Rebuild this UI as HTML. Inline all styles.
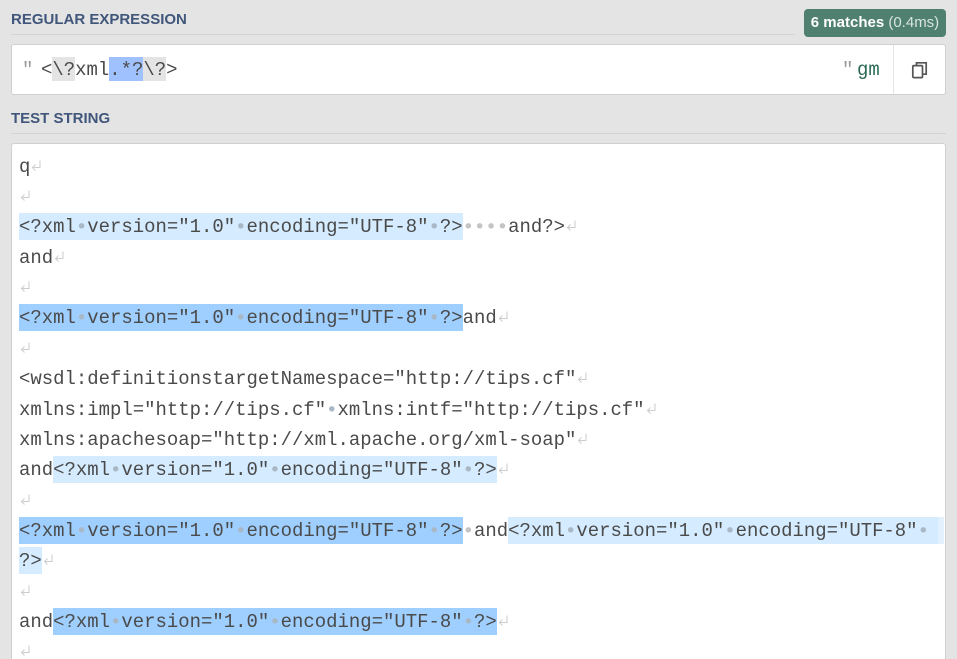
<!DOCTYPE html>
<html><head><meta charset="utf-8">
<style>
html,body{margin:0;padding:0;width:957px;height:659px;overflow:hidden;background:#e4e4e4}
body{position:relative;font-family:"Liberation Sans",sans-serif}
.abs{position:absolute}
.h{position:absolute;left:11px;font-size:15px;font-weight:bold;color:#40567a;line-height:20px;white-space:pre}
.rule{position:absolute;height:1px;background:#d3d3d3}
.box{position:absolute;background:#fff;border:1px solid #d0d0d0;border-radius:3px;box-sizing:border-box}
.m{font-family:"Liberation Mono","DejaVu Sans Mono",monospace;font-size:18.97px;color:#4a4a4a;white-space:pre}
.l{position:absolute;left:19px;height:27px;line-height:29px;width:930px}
.l span{display:inline-block;height:27px;vertical-align:top}
.a{background:#d5ebff}
.b{background:#9fcfff}
i{font-style:normal;color:#a9b8c6;font-family:"DejaVu Sans Mono",monospace;display:inline-block;width:11.385px;text-align:center;vertical-align:top}
.d i{color:#c4c4c4}
.w{display:inline-block;width:11.385px;height:12px;vertical-align:top;margin-top:7px}
.r{position:absolute;top:58px;height:24px;line-height:24px}
</style></head><body>

<div class="h" style="top:10px">REGULAR EXPRESSION</div>
<div class="rule" style="left:11px;top:34px;width:784px"></div>

<div class="abs" style="left:804px;top:9px;width:142px;height:28px;background:#4f8070;border-radius:4px;color:#fff;font-size:15px;line-height:28px;text-align:center;white-space:pre"><b>6 matches</b> <span style="color:#d9e5e1">(0.4ms)</span></div>

<div class="box" style="left:11px;top:44px;width:935px;height:51px"></div>
<div class="abs" style="left:893px;top:45px;width:1px;height:49px;background:#e4e4e4"></div>
<div class="abs" style="left:52px;top:57px;width:23px;height:24px;background:#e4e4e4"></div>
<div class="abs" style="left:143px;top:57px;width:23px;height:24px;background:#e4e4e4"></div>
<div class="abs" style="left:109px;top:57px;width:34px;height:24px;background:#9fc2ff"></div>
<div class="m r" style="left:22px;color:#999">"</div>
<div class="m r" style="left:41px">&lt;\?xml.*?\?&gt;</div>
<div class="m r" style="left:842px;color:#999">"</div>
<div class="m r" style="left:857px;color:#2a6a55">gm</div>
<svg class="abs" style="left:911px;top:61px" width="17" height="18" viewBox="0 0 17 18" fill="none" stroke="#555" stroke-width="1.7"><path d="M5.5 4V1.8h9.7v11.4H12"/><rect x="1.8" y="4.6" width="9.7" height="12" rx="1"/></svg>

<div class="h" style="top:109px">TEST STRING</div>
<div class="rule" style="left:11px;top:133px;width:935px"></div>

<div class="box" style="left:11px;top:143px;width:935px;height:530px"></div>

<div class="m l" style="top:153px">q<svg class="w" viewBox="0 0 11.4 12" fill="none" stroke="#ccc"><path d="M10 .5V7.5H2.5M5.5 4.5l-3 3 3 3"/></svg></div>
<div class="m l" style="top:183px"><svg class="w" viewBox="0 0 11.4 12" fill="none" stroke="#ccc"><path d="M10 .5V7.5H2.5M5.5 4.5l-3 3 3 3"/></svg></div>
<div class="m l" style="top:213px"><span class="a">&lt;?xml<i>•</i>version="1.0"<i>•</i>encoding="UTF-8"<i>•</i>?&gt;</span><span class="d"><i>•</i><i>•</i><i>•</i><i>•</i></span>and?&gt;<svg class="w" viewBox="0 0 11.4 12" fill="none" stroke="#ccc"><path d="M10 .5V7.5H2.5M5.5 4.5l-3 3 3 3"/></svg></div>
<div class="m l" style="top:244px">and<svg class="w" viewBox="0 0 11.4 12" fill="none" stroke="#ccc"><path d="M10 .5V7.5H2.5M5.5 4.5l-3 3 3 3"/></svg></div>
<div class="m l" style="top:274px"><svg class="w" viewBox="0 0 11.4 12" fill="none" stroke="#ccc"><path d="M10 .5V7.5H2.5M5.5 4.5l-3 3 3 3"/></svg></div>
<div class="m l" style="top:304px"><span class="b">&lt;?xml<i>•</i>version="1.0"<i>•</i>encoding="UTF-8"<i>•</i>?&gt;</span>and<svg class="w" viewBox="0 0 11.4 12" fill="none" stroke="#ccc"><path d="M10 .5V7.5H2.5M5.5 4.5l-3 3 3 3"/></svg></div>
<div class="m l" style="top:335px"><svg class="w" viewBox="0 0 11.4 12" fill="none" stroke="#ccc"><path d="M10 .5V7.5H2.5M5.5 4.5l-3 3 3 3"/></svg></div>
<div class="m l" style="top:365px">&lt;wsdl:definitionstargetNamespace="http://tips.cf"<svg class="w" viewBox="0 0 11.4 12" fill="none" stroke="#ccc"><path d="M10 .5V7.5H2.5M5.5 4.5l-3 3 3 3"/></svg></div>
<div class="m l" style="top:396px">xmlns:impl="http://tips.cf"<i>•</i>xmlns:intf="http://tips.cf"<svg class="w" viewBox="0 0 11.4 12" fill="none" stroke="#ccc"><path d="M10 .5V7.5H2.5M5.5 4.5l-3 3 3 3"/></svg></div>
<div class="m l" style="top:426px">xmlns:apachesoap="http://xml.apache.org/xml-soap"<svg class="w" viewBox="0 0 11.4 12" fill="none" stroke="#ccc"><path d="M10 .5V7.5H2.5M5.5 4.5l-3 3 3 3"/></svg></div>
<div class="m l" style="top:456px">and<span class="a">&lt;?xml<i>•</i>version="1.0"<i>•</i>encoding="UTF-8"<i>•</i>?&gt;</span><svg class="w" viewBox="0 0 11.4 12" fill="none" stroke="#ccc"><path d="M10 .5V7.5H2.5M5.5 4.5l-3 3 3 3"/></svg></div>
<div class="m l" style="top:487px"><svg class="w" viewBox="0 0 11.4 12" fill="none" stroke="#ccc"><path d="M10 .5V7.5H2.5M5.5 4.5l-3 3 3 3"/></svg></div>
<div class="abs a" style="left:508px;top:517px;width:430px;height:27px"></div>
<div class="abs" style="left:938px;top:517px;width:6px;height:27px;background:#e3f1ff"></div>
<div class="m l" style="top:517px"><span class="b">&lt;?xml<i>•</i>version="1.0"<i>•</i>encoding="UTF-8"<i>•</i>?&gt;</span><i style="color:#c4c4c4">•</i>and&lt;?xml<i>•</i>version="1.0"<i>•</i>encoding="UTF-8"<i>•</i></div>
<div class="m l" style="top:547px"><span class="a">?&gt;</span><svg class="w" viewBox="0 0 11.4 12" fill="none" stroke="#ccc"><path d="M10 .5V7.5H2.5M5.5 4.5l-3 3 3 3"/></svg></div>
<div class="m l" style="top:578px"><svg class="w" viewBox="0 0 11.4 12" fill="none" stroke="#ccc"><path d="M10 .5V7.5H2.5M5.5 4.5l-3 3 3 3"/></svg></div>
<div class="m l" style="top:608px">and<span class="b">&lt;?xml<i>•</i>version="1.0"<i>•</i>encoding="UTF-8"<i>•</i>?&gt;</span><svg class="w" viewBox="0 0 11.4 12" fill="none" stroke="#ccc"><path d="M10 .5V7.5H2.5M5.5 4.5l-3 3 3 3"/></svg></div>
<div class="m l" style="top:638px"><svg class="w" viewBox="0 0 11.4 12" fill="none" stroke="#ccc"><path d="M10 .5V7.5H2.5M5.5 4.5l-3 3 3 3"/></svg></div>

</body></html>
